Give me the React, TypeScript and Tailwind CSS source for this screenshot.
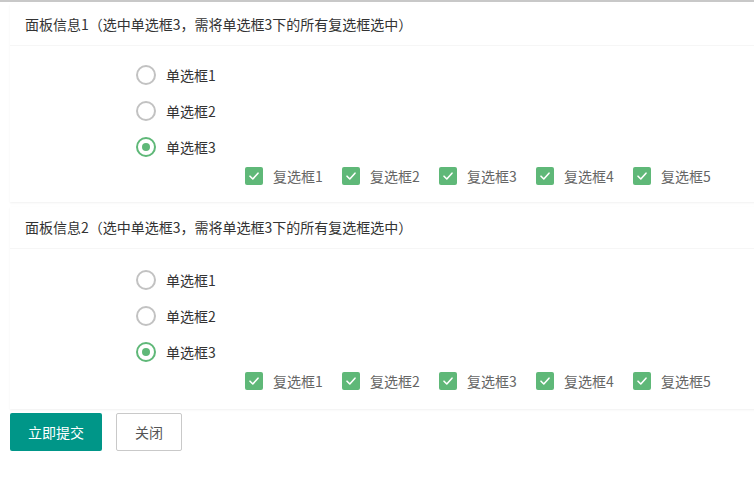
import React from "react";

const radios = ["单选框1", "单选框2", "单选框3"];
const checks = ["复选框1", "复选框2", "复选框3", "复选框4", "复选框5"];

const Radio = ({ label, checked }: { label: string; checked?: boolean }) => (
  <div className="flex h-9 items-center">
    <span
      className={`flex h-[20px] w-[20px] items-center justify-center rounded-full border-2 ${
        checked ? "border-[#5FB878]" : "border-[#c2c2c2]"
      }`}
    >
      {checked && <span className="h-[8px] w-[8px] rounded-full bg-[#5FB878]" />}
    </span>
    <span className="ml-[10px] text-[14px] text-[#333]">{label}</span>
  </div>
);

const Check = ({ label }: { label: string }) => (
  <div className="flex w-[97px] items-center">
    <span className="flex h-[18px] w-[18px] items-center justify-center rounded-[2px] bg-[#5FB878]">
      <svg width="12" height="12" viewBox="0 0 12 12" fill="none">
        <path d="M2 6.2 L4.8 9 L10 3.2" stroke="#fff" strokeWidth="1.6" strokeLinecap="round" strokeLinejoin="round" />
      </svg>
    </span>
    <span className="ml-[10px] text-[14px] text-[#666]">{label}</span>
  </div>
);

const Panel = ({ n, pad }: { n: number; pad: string }) => (
  <div className="w-[760px] bg-white shadow-[0_1px_2px_0_rgba(0,0,0,0.06)]">
    <div className="flex h-[42px] items-center border-b border-[#f6f6f6] px-[15px] text-[14px] text-[#333]">
      面板信息{n}（选中单选框3，需将单选框3下的所有复选框选中）
    </div>
    <div className={pad}>
      <div className="pl-[126px]">
        {radios.map((r, i) => (
          <Radio key={r} label={r} checked={i === 2} />
        ))}
      </div>
      <div className="-mt-[1px] flex h-[24px] pl-[235px]">
        {checks.map((c) => (
          <Check key={c} label={c} />
        ))}
      </div>
    </div>
  </div>
);

export default function App() {
  return (
    <div
      className="h-[479px] w-[754px] overflow-hidden bg-white"
      style={{ fontFamily: '"Noto Sans CJK SC", "Noto Sans", sans-serif' }}
    >
      <div className="h-[2px] bg-[#c8c8c8]" />
      <div className="flex flex-col gap-[5px] pl-[10px] pt-[2px]">
        <Panel n={1} pad="pt-[11px] pb-[14px]" />
        <Panel n={2} pad="pt-[13px] pb-[16px]" />
      </div>
      <div className="mt-[4px] flex gap-[14px] pl-[10px]">
        <button className="h-[38px] rounded-[2px] bg-[#009688] px-[18px] text-[14px] text-white">
          立即提交
        </button>
        <button className="h-[38px] rounded-[2px] border border-[#c9c9c9] bg-white px-[18px] text-[14px] text-[#555]">
          关闭
        </button>
      </div>
    </div>
  );
}
